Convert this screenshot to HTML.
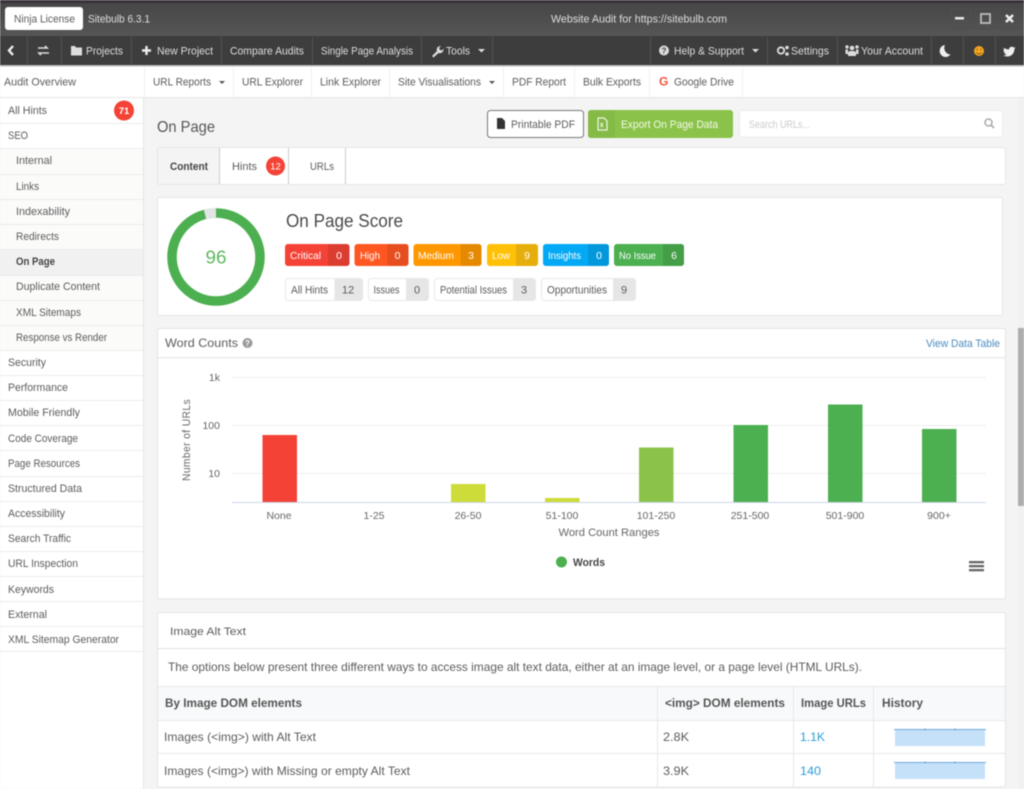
<!DOCTYPE html>
<html lang="en"><head><meta charset="utf-8"><title>Sitebulb</title>
<style>
html,body{margin:0;padding:0;width:1024px;height:789px;overflow:hidden;background:#f4f4f4}
svg{display:block;filter:blur(.45px)}
text{font-family:"Liberation Sans",sans-serif;font-size:11px;fill:#5c5c5c}
.t text{fill:#ddd}
.w text{fill:#fff;font-size:10.5px}
.c{text-anchor:middle}
</style></head><body>
<svg width="1024" height="789" viewBox="0 0 1024 789" xmlns="http://www.w3.org/2000/svg">
<defs><linearGradient id="g" x1="0" y1="0" x2="0" y2="1"><stop offset="0" stop-color="#474747"/><stop offset="1" stop-color="#565656"/></linearGradient></defs>
<rect width="1024" height="789" fill="#f4f4f4"/>
<!-- title bar -->
<rect width="1024" height="3" fill="#37323b"/>
<rect y="3" width="1024" height="33" fill="url(#g)"/>
<rect x="5" y="7" width="78" height="23" rx="3" fill="#fff"/>
<text x="14" y="22.500" textLength="61" lengthAdjust="spacingAndGlyphs" fill="#666">Ninja License</text>
<g class="t">
<text x="88" y="22.500" textLength="62" lengthAdjust="spacingAndGlyphs">Sitebulb 6.3.1</text>
<text x="551" y="22.500" textLength="176" lengthAdjust="spacingAndGlyphs">Website Audit for https://sitebulb.com</text>
</g>
<g fill="none" stroke="#4e4e4e"><rect x="951" y="9" width="20" height="19"/><rect x="976" y="9" width="20" height="19"/><rect x="1000" y="9" width="20" height="19"/></g>
<rect x="955" y="17" width="9" height="2.500" fill="#e8e8e8"/>
<rect x="981" y="14" width="9" height="9" fill="none" stroke="#bbb" stroke-width="1.800"/>
<path d="M1006 15l7 7M1013 15l-7 7" stroke="#eee" stroke-width="2.500"/>
<!-- toolbar -->
<rect y="36" width="1024" height="29" fill="#3d3d3d"/>
<g stroke="#525252"><path d="M27.500 37v27M61.500 37v27M131.500 37v27M221.500 37v27M312.500 37v27M421.500 37v27M492.500 37v27M650.500 37v27M767.500 37v27M837.500 37v27M931.500 37v27M963.500 37v27M995.500 37v27"/></g>
<path d="M13 46l-4 4.500 4 4.500" fill="none" stroke="#eee" stroke-width="2.400"/>
<path d="M38 48h9l-2-2M49 53h-10l2 2" fill="none" stroke="#ddd" stroke-width="1.600"/>
<path d="M71 46h4l1 1.500h6v8h-11z" fill="#ddd"/>
<path d="M146.500 46v9M142 50.500h9" stroke="#eee" stroke-width="2.400"/>
<path d="M432 56l5-5c-1-3 1-5 4-5l-2 2 1 2 2 .500 1.500-2c.5 3-2 5.500-5 4.500l-5 4.500z" fill="#ddd"/>
<path d="M478 49h7l-3.500 3.500z" fill="#ddd"/>
<circle cx="664" cy="50.500" r="5" fill="#ddd"/><text x="664" y="53.500" class="c" style="font-size:8px;font-weight:bold;fill:#3d3d3d">?</text>
<path d="M752 49h7l-3.500 3.500z" fill="#ddd"/>
<circle cx="781" cy="50.500" r="3.200" fill="none" stroke="#ddd" stroke-width="1.800"/><circle cx="787" cy="47.500" r="1.800" fill="#ddd"/><circle cx="787" cy="54" r="1.800" fill="#ddd"/>
<path d="M848 56v-3c0-1 1-2 2.500-2h3c1.500 0 2.500 1 2.500 2v3z" fill="#ddd"/><circle cx="852" cy="48" r="2.300" fill="#ddd"/><circle cx="847" cy="47" r="1.700" fill="#ddd"/><circle cx="857" cy="47" r="1.700" fill="#ddd"/><path d="M845.500 54v-4.500h2.500v4.500zM856 54v-4.500h2.500v4.500z" fill="#ddd"/>
<path d="M945 45a6 6 0 1 0 5.500 9.500 6.500 6.500 0 0 1-5.500-9.500z" fill="#eee"/>
<circle cx="979" cy="51" r="5" fill="#f5a623"/><path d="M976.500 52.500c1 2 4 2 5 0" fill="none" stroke="#8a5a10" stroke-width=".9"/><circle cx="977" cy="49.500" r=".7" fill="#8a5a10"/><circle cx="981" cy="49.500" r=".7" fill="#8a5a10"/>
<path d="M1004 48c2 1 3.500 1.500 5 1.500 0-2.500 3-3.500 4.500-2l1.800-.5-1 1.500 1-.2-1 1.200c0 4-3 7-7 7-1.500 0-3-.4-4-1 1.200 0 2.300-.3 3.200-1-1.300-.2-2-1-2.300-1.800h1c-1.200-.5-1.800-1.500-1.800-2.500l1 .2c-1-.8-1-1.700-.4-2.400z" fill="#eee"/>
<g class="t">
<text x="86" y="54.500" textLength="37" lengthAdjust="spacingAndGlyphs">Projects</text>
<text x="157" y="54.500" textLength="56" lengthAdjust="spacingAndGlyphs">New Project</text>
<text x="230" y="54.500" textLength="74" lengthAdjust="spacingAndGlyphs">Compare Audits</text>
<text x="321" y="54.500" textLength="92" lengthAdjust="spacingAndGlyphs">Single Page Analysis</text>
<text x="446" y="54.500" textLength="24" lengthAdjust="spacingAndGlyphs">Tools</text>
<text x="674" y="54.500" textLength="70" lengthAdjust="spacingAndGlyphs">Help &amp; Support</text>
<text x="791" y="54.500" textLength="38" lengthAdjust="spacingAndGlyphs">Settings</text>
<text x="861" y="54.500" textLength="62" lengthAdjust="spacingAndGlyphs">Your Account</text>
</g>
<rect y="65" width="1024" height="1.500" fill="#bbb"/>
<!-- subnav -->
<rect y="66.500" width="1024" height="31" fill="#fff"/>
<rect y="97" width="1024" height="1" fill="#e6e6e6"/>
<g stroke="#efefef"><path d="M144.500 67v30M233.500 67v30M311.500 67v30M389.500 67v30M503.500 67v30M574.500 67v30M649.500 67v30M742.500 67v30"/></g>
<text x="4" y="85.500" textLength="72" lengthAdjust="spacingAndGlyphs">Audit Overview</text>
<text x="153" y="85.500" textLength="58" lengthAdjust="spacingAndGlyphs">URL Reports</text>
<path d="M219 81h6l-3 3z" fill="#555"/>
<text x="242" y="85.500" textLength="61" lengthAdjust="spacingAndGlyphs">URL Explorer</text>
<text x="320" y="85.500" textLength="61" lengthAdjust="spacingAndGlyphs">Link Explorer</text>
<text x="398" y="85.500" textLength="83" lengthAdjust="spacingAndGlyphs">Site Visualisations</text>
<path d="M489 81h6l-3 3z" fill="#555"/>
<text x="512" y="85.500" textLength="54" lengthAdjust="spacingAndGlyphs">PDF Report</text>
<text x="583" y="85.500" textLength="58" lengthAdjust="spacingAndGlyphs">Bulk Exports</text>
<text x="659" y="85.500" style="font-weight:bold;font-size:12px;fill:#f0543c">G</text>
<text x="674" y="85.500" textLength="60" lengthAdjust="spacingAndGlyphs">Google Drive</text>
<!-- sidebar -->
<rect y="98" width="143" height="691" fill="#fff"/>
<rect x="143" y="98" width="1" height="691" fill="#e6e6e6"/>
<rect y="148" width="143" height="202" fill="#fbfbfa"/>
<rect y="249" width="143" height="26" fill="#f1f1f1"/>
<g stroke="#ececec"><path d="M0 123.500h143M0 148.500h143M0 174.500h143M0 199.500h143M0 224.500h143M0 249.500h143M0 275.500h143M0 300.500h143M0 325.500h143M0 350.500h143M0 375.500h143M0 400.500h143M0 425.500h143M0 450.500h143M0 476.500h143M0 501.500h143M0 526.500h143M0 551.500h143M0 576.500h143M0 601.500h143M0 626.500h143M0 651.500h143"/></g>
<circle cx="124" cy="110.500" r="10" fill="#f44336"/>
<text x="124" y="114" class="c" style="fill:#fff;font-size:9.500px;font-weight:bold">71</text>
<text x="8" y="114" textLength="39" lengthAdjust="spacingAndGlyphs">All Hints</text>
<text x="8" y="139" textLength="20" lengthAdjust="spacingAndGlyphs">SEO</text>
<text x="16" y="164" textLength="36" lengthAdjust="spacingAndGlyphs">Internal</text>
<text x="16" y="190" textLength="23" lengthAdjust="spacingAndGlyphs">Links</text>
<text x="16" y="215" textLength="54" lengthAdjust="spacingAndGlyphs">Indexability</text>
<text x="16" y="240" textLength="43" lengthAdjust="spacingAndGlyphs">Redirects</text>
<text x="16" y="265" textLength="39" lengthAdjust="spacingAndGlyphs" style="font-weight:bold;fill:#444">On Page</text>
<text x="16" y="290" textLength="84" lengthAdjust="spacingAndGlyphs">Duplicate Content</text>
<text x="16" y="316" textLength="65" lengthAdjust="spacingAndGlyphs">XML Sitemaps</text>
<text x="16" y="341" textLength="91" lengthAdjust="spacingAndGlyphs">Response vs Render</text>
<text x="8" y="366" textLength="38" lengthAdjust="spacingAndGlyphs">Security</text>
<text x="8" y="391" textLength="60" lengthAdjust="spacingAndGlyphs">Performance</text>
<text x="8" y="416" textLength="72" lengthAdjust="spacingAndGlyphs">Mobile Friendly</text>
<text x="8" y="442" textLength="70" lengthAdjust="spacingAndGlyphs">Code Coverage</text>
<text x="8" y="467" textLength="72" lengthAdjust="spacingAndGlyphs">Page Resources</text>
<text x="8" y="492" textLength="74" lengthAdjust="spacingAndGlyphs">Structured Data</text>
<text x="8" y="517" textLength="57" lengthAdjust="spacingAndGlyphs">Accessibility</text>
<text x="8" y="542" textLength="63" lengthAdjust="spacingAndGlyphs">Search Traffic</text>
<text x="8" y="567" textLength="70" lengthAdjust="spacingAndGlyphs">URL Inspection</text>
<text x="8" y="593" textLength="46" lengthAdjust="spacingAndGlyphs">Keywords</text>
<text x="8" y="618" textLength="39" lengthAdjust="spacingAndGlyphs">External</text>
<text x="8" y="643" textLength="111" lengthAdjust="spacingAndGlyphs">XML Sitemap Generator</text>
<!-- heading row -->
<text x="157" y="132" textLength="58" lengthAdjust="spacingAndGlyphs" style="font-size:16px;fill:#555">On Page</text>
<rect x="487.500" y="110.500" width="96" height="27" rx="3" fill="#fff" stroke="#777"/>
<path d="M497 118h5l3 3v8h-8z" fill="#333"/>
<text x="511" y="128" textLength="64" lengthAdjust="spacingAndGlyphs">Printable PDF</text>
<rect x="588" y="110" width="145" height="28" rx="3" fill="#8bc34a"/>
<path d="M591 110h24v28h-24a3 3 0 0 1-3-3v-22a3 3 0 0 1 3-3z" fill="#85ba47"/>
<path d="M598 118h6l3 3v9h-9z" fill="none" stroke="#eef6e2" stroke-width="1.200"/>
<path d="M600.500 123l2.500 4M603 123l-2.500 4" stroke="#eef6e2"/>
<text x="621" y="128" textLength="97" lengthAdjust="spacingAndGlyphs" style="fill:#f3f9ea">Export On Page Data</text>
<rect x="739.500" y="110.500" width="263" height="26.500" rx="2" fill="#fff" stroke="#ececec"/>
<text x="749" y="128" textLength="61" lengthAdjust="spacingAndGlyphs" style="fill:#ccc">Search URLs...</text>
<circle cx="988.500" cy="122.500" r="3.500" fill="none" stroke="#aaa" stroke-width="1.500"/><path d="M991 125l3 3" stroke="#aaa" stroke-width="1.700"/>
<!-- tabs -->
<rect x="157.500" y="147.500" width="848" height="37" rx="2" fill="#fff" stroke="#e6e6e6"/>
<rect x="158" y="148" width="61" height="36" fill="#f4f4f4"/>
<g stroke="#ccc"><path d="M219.500 148v36M288.500 148v36M345.500 148v36"/></g>
<text x="170" y="170" textLength="38" lengthAdjust="spacingAndGlyphs" style="font-weight:bold;fill:#444">Content</text>
<text x="232" y="170" textLength="25" lengthAdjust="spacingAndGlyphs">Hints</text>
<circle cx="275.500" cy="166" r="9.500" fill="#f44336"/>
<text x="275.500" y="169.500" class="c" style="fill:#fff;font-size:9.500px">12</text>
<text x="310" y="170" textLength="24" lengthAdjust="spacingAndGlyphs">URLs</text>
<!-- score card -->
<rect x="157.500" y="197.500" width="845" height="118" rx="2" fill="#fff" stroke="#e4e4e4"/>
<circle cx="216" cy="257" r="44" fill="none" stroke="#4caf50" stroke-width="9.500"/>
<path d="M205 214.400A44 44 0 0 1 216 213" fill="none" stroke="#e4e4e4" stroke-width="9.500"/>
<text x="216" y="263.500" class="c" textLength="21" lengthAdjust="spacingAndGlyphs" style="font-size:18px;fill:#5cb860">96</text>
<text x="286" y="227" textLength="117" lengthAdjust="spacingAndGlyphs" style="font-size:18px;fill:#4a4a4a">On Page Score</text>
<!-- badges -->
<rect x="285" y="244" width="64.500" height="22" rx="3" fill="#f44336"/><path d="M328 244h18.500a3 3 0 0 1 3 3v16a3 3 0 0 1-3 3h-18.500z" fill="#dc3d31"/>
<rect x="354.500" y="244" width="54" height="22" rx="3" fill="#ff5722"/><path d="M387.500 244h18a3 3 0 0 1 3 3v16a3 3 0 0 1-3 3h-18z" fill="#e64e1f"/>
<rect x="413.500" y="244" width="68" height="22" rx="3" fill="#ff9800"/><path d="M460.500 244h18a3 3 0 0 1 3 3v16a3 3 0 0 1-3 3h-18z" fill="#e58900"/>
<rect x="487" y="244" width="51" height="22" rx="3" fill="#ffc107"/><path d="M516 244h19a3 3 0 0 1 3 3v16a3 3 0 0 1-3 3h-19z" fill="#e6ae0d"/>
<rect x="543" y="244" width="66" height="22" rx="3" fill="#03a9f4"/><path d="M588 244h18a3 3 0 0 1 3 3v16a3 3 0 0 1-3 3h-18z" fill="#0398dc"/>
<rect x="614" y="244" width="70" height="22" rx="3" fill="#4caf50"/><path d="M663 244h18a3 3 0 0 1 3 3v16a3 3 0 0 1-3 3h-18z" fill="#449e48"/>
<g class="w">
<text x="290" y="259" textLength="31" lengthAdjust="spacingAndGlyphs">Critical</text><text x="339" y="259" class="c">0</text>
<text x="360" y="259" textLength="20" lengthAdjust="spacingAndGlyphs">High</text><text x="397.500" y="259" class="c">0</text>
<text x="418" y="259" textLength="36" lengthAdjust="spacingAndGlyphs">Medium</text><text x="471" y="259" class="c">3</text>
<text x="492" y="259" textLength="18" lengthAdjust="spacingAndGlyphs">Low</text><text x="527" y="259" class="c">9</text>
<text x="548" y="259" textLength="33" lengthAdjust="spacingAndGlyphs">Insights</text><text x="599" y="259" class="c">0</text>
<text x="619" y="259" textLength="37" lengthAdjust="spacingAndGlyphs">No Issue</text><text x="674" y="259" class="c">6</text>
</g>
<g fill="#fff" stroke="#e8e8e8"><rect x="285.500" y="278.500" width="77" height="22" rx="3"/><rect x="368.500" y="278.500" width="60" height="22" rx="3"/><rect x="434.500" y="278.500" width="101" height="22" rx="3"/><rect x="541.500" y="278.500" width="94" height="22" rx="3"/></g>
<g fill="#e6e6e6"><path d="M334.500 278.500h25a3 3 0 0 1 3 3v16a3 3 0 0 1-3 3h-25z"/><path d="M406 278.500h19.500a3 3 0 0 1 3 3v16a3 3 0 0 1-3 3h-19.500z"/><path d="M513 278.500h19.500a3 3 0 0 1 3 3v16a3 3 0 0 1-3 3h-19.500z"/><path d="M613 278.500h19.500a3 3 0 0 1 3 3v16a3 3 0 0 1-3 3h-19.500z"/></g>
<g>
<text x="291" y="293.500" textLength="37" lengthAdjust="spacingAndGlyphs">All Hints</text><text x="348" y="293.500" class="c">12</text>
<text x="373.500" y="293.500" textLength="26" lengthAdjust="spacingAndGlyphs">Issues</text><text x="417" y="293.500" class="c">0</text>
<text x="440" y="293.500" textLength="67" lengthAdjust="spacingAndGlyphs">Potential Issues</text><text x="524" y="293.500" class="c">3</text>
<text x="547" y="293.500" textLength="60" lengthAdjust="spacingAndGlyphs">Opportunities</text><text x="624" y="293.500" class="c">9</text>
</g>
<!-- chart card -->
<rect x="157.500" y="328.500" width="848" height="270.500" rx="2" fill="#fff" stroke="#e4e4e4"/>
<rect x="158" y="357" width="847" height="1.500" fill="#ececec"/>
<text x="165" y="347" textLength="73" lengthAdjust="spacingAndGlyphs" style="font-size:12px">Word Counts</text>
<circle cx="247.500" cy="343" r="5" fill="#9a9a9a"/><text x="247.500" y="346" class="c" style="font-size:8px;font-weight:bold;fill:#fff">?</text>
<text x="926" y="347" textLength="74" lengthAdjust="spacingAndGlyphs" style="fill:#4a8bbf">View Data Table</text>
<g stroke="#eee"><path d="M232 377.500h754M232 425.500h754M232 473.500h754"/></g>
<path d="M232 502.500h754" stroke="#ccd6eb"/>
<text x="220" y="381" text-anchor="end" style="font-size:10.500px;fill:#666">1k</text>
<text x="220" y="429" text-anchor="end" style="font-size:10.500px;fill:#666">100</text>
<text x="220" y="477" text-anchor="end" style="font-size:10.500px;fill:#666">10</text>
<text transform="translate(190 440) rotate(-90)" class="c" textLength="82" lengthAdjust="spacingAndGlyphs" style="font-size:11px;fill:#666;letter-spacing:.4px">Number of URLs</text>
<rect x="262.500" y="435" width="34.500" height="67" fill="#f44336"/>
<rect x="451" y="484" width="34.500" height="18" fill="#cddc39"/>
<rect x="545" y="498" width="34.500" height="4" fill="#cddc39"/>
<rect x="639" y="447.500" width="34.500" height="54.500" fill="#8bc34a"/>
<rect x="733.500" y="425" width="34.500" height="77" fill="#4caf50"/>
<rect x="828" y="404.500" width="34.500" height="97.500" fill="#4caf50"/>
<rect x="922" y="429" width="34.500" height="73" fill="#4caf50"/>
<text x="279" y="519" class="c" style="font-size:10.500px;fill:#666">None</text>
<text x="374" y="519" class="c" style="font-size:10.500px;fill:#666">1-25</text>
<text x="468" y="519" class="c" style="font-size:10.500px;fill:#666">26-50</text>
<text x="562" y="519" class="c" style="font-size:10.500px;fill:#666">51-100</text>
<text x="656" y="519" class="c" style="font-size:10.500px;fill:#666">101-250</text>
<text x="750" y="519" class="c" style="font-size:10.500px;fill:#666">251-500</text>
<text x="845" y="519" class="c" style="font-size:10.500px;fill:#666">501-900</text>
<text x="939" y="519" class="c" style="font-size:10.500px;fill:#666">900+</text>
<text x="558.500" y="536" textLength="101" lengthAdjust="spacingAndGlyphs" style="fill:#666">Word Count Ranges</text>
<circle cx="561.500" cy="562" r="5.500" fill="#4caf50"/>
<text x="573" y="566" textLength="32" lengthAdjust="spacingAndGlyphs" style="font-weight:bold;fill:#444">Words</text>
<g fill="#666"><rect x="969" y="561" width="15" height="2.300"/><rect x="969" y="565" width="15" height="2.300"/><rect x="969" y="569" width="15" height="2.300"/></g>
<!-- table card -->
<rect x="157.500" y="612.500" width="848" height="174.500" rx="2" fill="#fff" stroke="#e4e4e4"/>
<rect x="158" y="648" width="847" height="1" fill="#e2e2e2"/>
<text x="170" y="635" textLength="76" lengthAdjust="spacingAndGlyphs">Image Alt Text</text>
<text x="168" y="671" textLength="694" lengthAdjust="spacingAndGlyphs" style="font-size:12px">The options below present three different ways to access image alt text data, either at an image level, or a page level (HTML URLs).</text>
<rect x="158" y="686" width="847" height="34" fill="#f8f9fa"/>
<g stroke="#e8e8e8"><path d="M158 686.500h847M158 720.500h847M158 753.500h847M657.500 686v101M793.500 686v101M873.500 686v101"/></g>
<text x="165" y="707" textLength="137" lengthAdjust="spacingAndGlyphs" style="fill:#555;font-size:12px;font-weight:bold">By Image DOM elements</text>
<text x="665" y="707" textLength="120" lengthAdjust="spacingAndGlyphs" style="fill:#555;font-size:12px;font-weight:bold">&lt;img&gt; DOM elements</text>
<text x="801" y="707" textLength="65" lengthAdjust="spacingAndGlyphs" style="fill:#555;font-size:12px;font-weight:bold">Image URLs</text>
<text x="882" y="707" textLength="41" lengthAdjust="spacingAndGlyphs" style="fill:#555;font-size:12px;font-weight:bold">History</text>
<text x="164" y="741" textLength="152" lengthAdjust="spacingAndGlyphs" style="font-size:12px">Images (&lt;img&gt;) with Alt Text</text>
<text x="663" y="741" textLength="26" lengthAdjust="spacingAndGlyphs" style="font-size:12px">2.8K</text>
<text x="800" y="741" textLength="25" lengthAdjust="spacingAndGlyphs" style="font-size:12px;fill:#2a9fd8">1.1K</text>
<text x="164" y="775" textLength="246" lengthAdjust="spacingAndGlyphs" style="font-size:12px">Images (&lt;img&gt;) with Missing or empty Alt Text</text>
<text x="663" y="775" textLength="26" lengthAdjust="spacingAndGlyphs" style="font-size:12px">3.9K</text>
<text x="800" y="775" textLength="21" lengthAdjust="spacingAndGlyphs" style="font-size:12px;fill:#2a9fd8">140</text>
<rect x="895" y="729" width="90" height="17" fill="#c5e1fa"/><path d="M894 729.500h92" stroke="#6fa8d8"/><path d="M925 728.500v2M955 728.500v2" stroke="#5f9bd0"/>
<rect x="895" y="762" width="90" height="17" fill="#c5e1fa"/><path d="M894 762.500h92" stroke="#6fa8d8"/><path d="M925 761.500v2M955 761.500v2" stroke="#5f9bd0"/>
<!-- scrollbar -->
<rect x="1018" y="98" width="6" height="691" fill="#f1f1f1"/>
<rect x="1018" y="328" width="6" height="178" fill="#adadad"/>
</svg>
</body></html>
